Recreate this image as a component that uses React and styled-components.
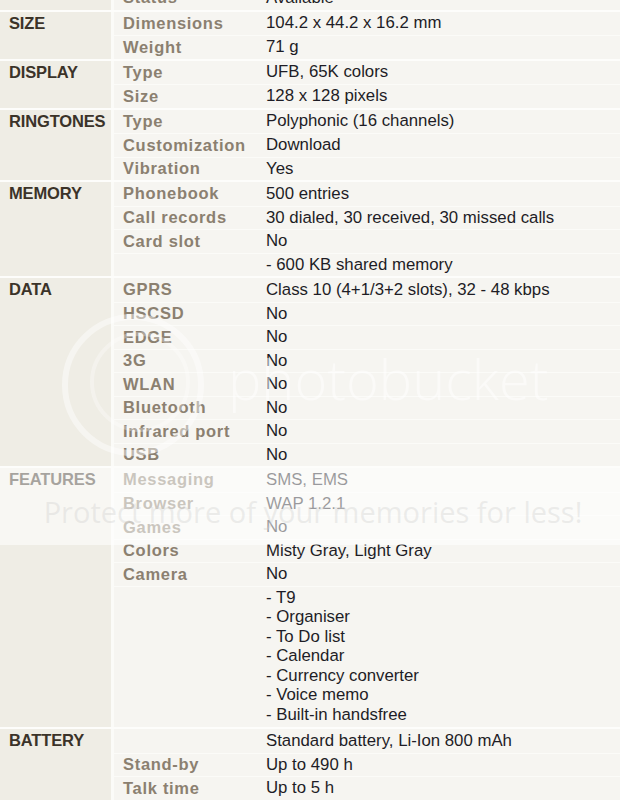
import React from "react";
import styled, { createGlobalStyle } from "styled-components";

const Global = createGlobalStyle`
  html, body { margin: 0; padding: 0; background: #ffffff; }
  body { font-family: "Liberation Sans", Arial, sans-serif; overflow: hidden; }
`;

const Page = styled.div`
  position: relative;
  width: 626px;
  height: 800px;
  overflow: hidden;
  background: #ffffff;
`;

const Table = styled.div`
  width: 620px;
  margin-top: -14px;
  display: flex;
  flex-direction: column;
`;

const Section = styled.div`
  display: flex;
  border-top: ${(p) => (p.$first ? "0" : "2px solid #fdfdfb")};
`;

const Heading = styled.div`
  width: 114px;
  flex: none;
  box-sizing: border-box;
  padding: 0 0 0 9px;
  background: #efede5;
  color: #3b3329;
  font-weight: 700;
  font-size: 16.5px;
  letter-spacing: -0.15px;
  line-height: 23.5px;
  border-right: 3px solid #fbfbf8;
`;

const Rows = styled.div`
  flex: 1;
  display: flex;
  flex-direction: column;
  background: #f6f5f1;
`;

const Row = styled.div`
  display: grid;
  grid-template-columns: 152px 1fr;
  box-sizing: border-box;
  min-height: 23.5px;
  border-top: ${(p) => (p.$first ? "0" : "1px solid #fbfbf8")};
`;

const Label = styled.div`
  padding-left: 9px;
  display: flex;
  align-items: center;
  color: #8b8070;
  font-weight: 700;
  font-size: 16.5px;
  letter-spacing: 0.7px;
  white-space: nowrap;
`;

const Value = styled.div`
  display: flex;
  align-items: center;
  color: #1e1d26;
  font-size: 16.8px;
  white-space: nowrap;
`;

const List = styled.div`
  padding: 1px 0 3px 0;
  color: #1e1d26;
  font-size: 16.8px;
  line-height: 19.5px;
  white-space: nowrap;
`;

const Band = styled.div`
  position: absolute;
  left: 0;
  top: 468px;
  width: 626px;
  height: 77px;
  background: rgba(255, 255, 255, 0.55);
  display: flex;
  align-items: center;
  justify-content: center;
  pointer-events: none;
`;

const BandText = styled.span`
  font-family: "Open Sans", "Liberation Sans", sans-serif;
  font-size: 29px;
  color: rgba(205, 205, 205, 0.35);
  padding-top: 10px;
`;

const Mark = styled.div`
  position: absolute;
  left: 228px;
  top: 340px;
  font-family: "Open Sans", "Liberation Sans", sans-serif;
  font-size: 56px;
  font-weight: 300;
  color: rgba(255, 255, 255, 0.5);
  pointer-events: none;
`;

const Logo = styled.svg`
  position: absolute;
  left: 58px;
  top: 310px;
  pointer-events: none;
`;

const data = [
  { h: "", rows: [["Status", "Available"]] },
  { h: "SIZE", rows: [["Dimensions", "104.2 x 44.2 x 16.2 mm"], ["Weight", "71 g"]] },
  { h: "DISPLAY", rows: [["Type", "UFB, 65K colors"], ["Size", "128 x 128 pixels"]] },
  {
    h: "RINGTONES",
    rows: [
      ["Type", "Polyphonic (16 channels)"],
      ["Customization", "Download"],
      ["Vibration", "Yes"],
    ],
  },
  {
    h: "MEMORY",
    rows: [
      ["Phonebook", "500 entries"],
      ["Call records", "30 dialed, 30 received, 30 missed calls"],
      ["Card slot", "No"],
      ["", "- 600 KB shared memory"],
    ],
  },
  {
    h: "DATA",
    rows: [
      ["GPRS", "Class 10 (4+1/3+2 slots), 32 - 48 kbps"],
      ["HSCSD", "No"],
      ["EDGE", "No"],
      ["3G", "No"],
      ["WLAN", "No"],
      ["Bluetooth", "No"],
      ["Infrared port", "No"],
      ["USB", "No"],
    ],
  },
  {
    h: "FEATURES",
    rows: [
      ["Messaging", "SMS, EMS"],
      ["Browser", "WAP 1.2.1"],
      ["Games", "No"],
      ["Colors", "Misty Gray, Light Gray"],
      ["Camera", "No"],
      [
        "",
        [
          "- T9",
          "- Organiser",
          "- To Do list",
          "- Calendar",
          "- Currency converter",
          "- Voice memo",
          "- Built-in handsfree",
        ],
      ],
    ],
  },
  {
    h: "BATTERY",
    rows: [
      ["", "Standard battery, Li-Ion 800 mAh"],
      ["Stand-by", "Up to 490 h"],
      ["Talk time", "Up to 5 h"],
    ],
  },
];

export default function App() {
  return (
    <Page>
      <Global />
      <Table>
        {data.map((s, i) => (
          <Section key={i} $first={i === 0}>
            <Heading>{s.h}</Heading>
            <Rows>
              {s.rows.map(([l, v], j) => (
                <Row key={j} $first={j === 0}>
                  <Label>{l}</Label>
                  {Array.isArray(v) ? (
                    <List>
                      {v.map((t) => (
                        <div key={t}>{t}</div>
                      ))}
                    </List>
                  ) : (
                    <Value>{v}</Value>
                  )}
                </Row>
              ))}
            </Rows>
          </Section>
        ))}
      </Table>
      <Logo width="150" height="150" viewBox="0 0 150 150">
        <circle cx="75" cy="75" r="68" fill="none" stroke="rgba(255,255,255,0.45)" strokeWidth="6" />
        <circle cx="82" cy="72" r="48" fill="none" stroke="rgba(255,255,255,0.3)" strokeWidth="4" />
      </Logo>
      <Mark>photobucket</Mark>
      <Band>
        <BandText>Protect more of your memories for less!</BandText>
      </Band>
    </Page>
  );
}
